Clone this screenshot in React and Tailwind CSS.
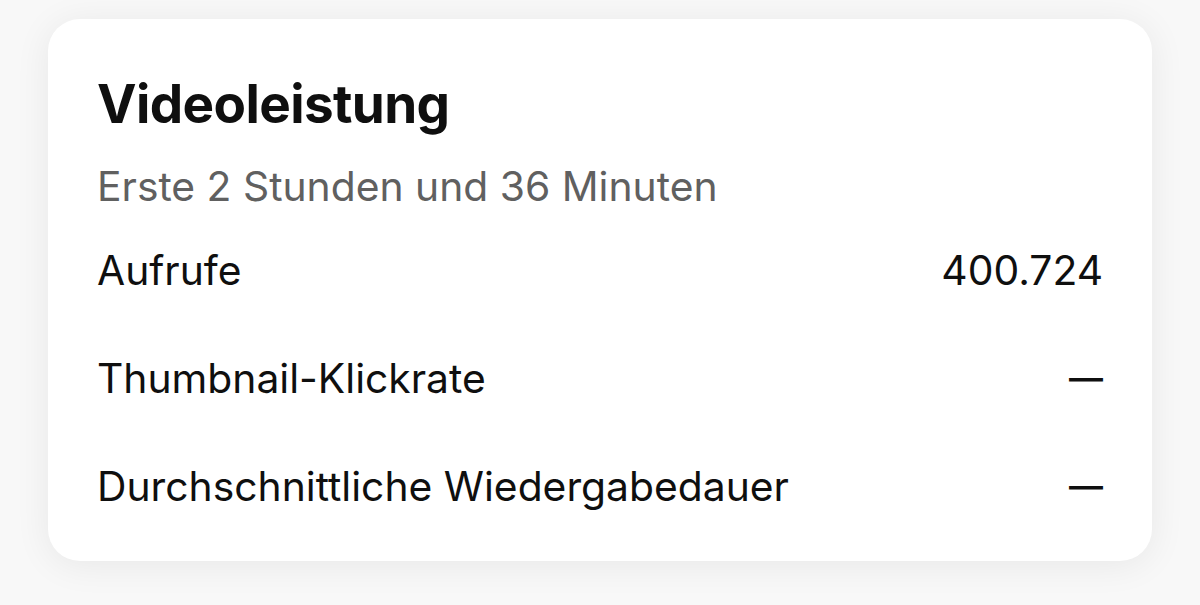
export default function App() {
  const rows = [
    { label: 'Aufrufe', value: '400.724' },
    { label: 'Thumbnail-Klickrate', value: null },
    { label: 'Durchschnittliche Wiedergabedauer', value: null },
  ];

  return (
    <div className="w-[1200px] h-[605px] bg-[#f8f8f8] pt-[19px] px-[48px] font-['Inter',sans-serif] overflow-hidden">
      {/* Performance card */}
      <div className="bg-white rounded-[32px] shadow-[0_4px_36px_rgba(0,0,0,0.07)] h-[542px] pl-[49px] pr-[49px] pt-[53px]">
        <h2 className="text-[53px] leading-[64px] font-bold text-[#0f0f0f] tracking-[-0.6px]">
          Videoleistung
        </h2>
        <p className="mt-[26px] text-[40.8px] leading-[48px] text-[#606060]">
          Erste 2 Stunden und 36 Minuten
        </p>
        <div className="mt-[36px] flex flex-col gap-[60px]">
          {rows.map(r => (
            <div key={r.label} className="flex justify-between items-center h-[48px] text-[40.8px] leading-[48px] text-[#0f0f0f]">
              <span>{r.label}</span>
              {r.value ? (
                <span>{r.value}</span>
              ) : (
                <span className="text-[34px] font-semibold">—</span>
              )}
            </div>
          ))}
        </div>
      </div>
    </div>
  );
}
